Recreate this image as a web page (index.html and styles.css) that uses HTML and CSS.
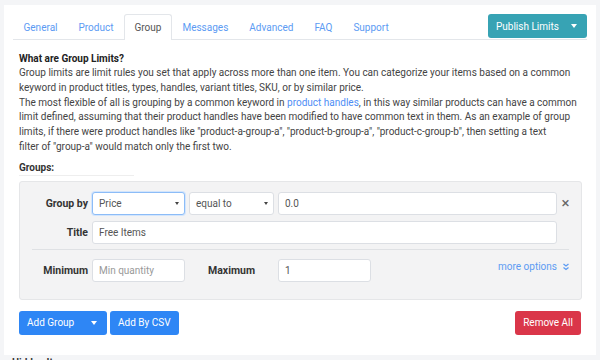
FILE: index.html
```html
<!DOCTYPE html>
<html>
<head>
  <title>Group Limits</title>
  <link rel="stylesheet" href="styles.css">
</head>
<body>
  <div class="card">
    <div class="nav">
      <ul class="tabs">
        <li><a href="#">General</a></li>
        <li><a href="#">Product</a></li>
        <li class="active"><a href="#">Group</a></li>
        <li><a href="#">Messages</a></li>
        <li><a href="#">Advanced</a></li>
        <li><a href="#">FAQ</a></li>
        <li><a href="#">Support</a></li>
      </ul>
      <button class="btn btn-info">Publish Limits <span class="caret"></span></button>
    </div>

    <div class="content">
      <h4>What are Group Limits?</h4>
      <p class="intro">Group limits are limit rules you set that apply across more than one item. You can categorize your items based on a common keyword in product titles, types, handles, variant titles, SKU, or by similar price.<br>The most flexible of all is grouping by a common keyword in <a href="#">product handles</a>, in this way similar products can have a common limit defined, assuming that their product handles have been modified to have common text in them. As an example of group limits, if there were product handles like "product-a-group-a", "product-b-group-a", "product-c-group-b", then setting a text<br>filter of "group-a" would match only the first two.</p>

      <h5>Groups:</h5>

      <div class="group-box">
        <div class="grid">
          <label>Group by</label>
          <div class="select focus">Price</div>
          <div class="select">equal to</div>
          <input type="text" value="0.0">
          <span class="close">&times;</span>

          <label>Title</label>
          <input class="wide" type="text" value="Free Items">
        </div>

        <hr>

        <div class="grid">
          <label>Minimum</label>
          <input type="text" placeholder="Min quantity">
          <label class="center">Maximum</label>
          <div class="max-cell">
            <input class="short" type="text" value="1">
            <a href="#" class="more">more options</a>
          </div>
          <span class="chev">
            <svg width="8" height="8" viewBox="0 0 8 8"><path d="M1.5 1l2.5 2 2.5-2M1.5 4.5l2.5 2 2.5-2" fill="none" stroke="#5c9bf3" stroke-width="1.3"/></svg>
          </span>
        </div>
      </div>

      <div class="actions">
        <button class="btn btn-primary add">Add Group <span class="caret"></span></button>
        <button class="btn btn-primary">Add By CSV</button>
        <button class="btn btn-danger right">Remove All</button>
      </div>
    </div>
  </div>
  <div class="below">Hidden Items</div>
</body>
</html>
```

FILE: styles.css
```css
body {
  font-family: Roboto, "Noto Sans", sans-serif;
  font-size: 10px;
  color: #444;
  background-color: #f4f5f7;
  margin: 0;
  padding: 5px 4px 0 4px;
}

.card {
  background-color: #fff;
  padding: 9px 9px 19px 9px;
  height: 322px;
}

.nav {
  display: flex;
  justify-content: space-between;
  align-items: flex-start;
  border-bottom: 1px solid #e3e6ea;
  height: 25px;
}

.tabs {
  list-style: none;
  margin: 0;
  padding: 0;
  display: flex;
}

.tabs li a {
  display: block;
  height: 25px;
  line-height: 25px;
  padding: 0 9.5px;
  color: #5c9bf3;
  text-decoration: none;
  border: 1px solid transparent;
  border-bottom: none;
  box-sizing: border-box;
  border-radius: 3px 3px 0 0;
}

.tabs li.active a {
  color: #555;
  background: #fff;
  border-color: #e3e6ea;
  height: 26px;
}

.btn {
  font-family: inherit;
  font-size: 10px;
  color: #fff;
  border: none;
  border-radius: 3px;
  height: 24px;
  padding: 0 8px;
  cursor: pointer;
  display: inline-flex;
  align-items: center;
  white-space: nowrap;
}

.btn-info {
  background-color: #37a3b4;
  width: 99px;
}

.btn-primary {
  background-color: #2e86f5;
}

.btn-danger {
  background-color: #da3649;
}

.caret {
  display: inline-block;
  width: 0;
  height: 0;
  border-left: 3.5px solid transparent;
  border-right: 3.5px solid transparent;
  border-top: 4px solid #fff;
  margin-left: auto;
  margin-right: 2px;
}

.content {
  padding: 0 5px 0 6px;
}

h4 {
  font-size: 10px;
  font-weight: bold;
  color: #222;
  margin: 11px 0 0 0;
  line-height: 15px;
}

.intro {
  margin: 0;
  line-height: 14.8px;
}

a {
  color: #4f8ef5;
  text-decoration: none;
}

h5 {
  font-size: 10px;
  font-weight: bold;
  color: #333;
  margin: 6px 0 0 0;
  line-height: 13px;
  padding-bottom: 1px;
  border-bottom: 1px solid #eee;
  width: 115px;
}

.group-box {
  margin-top: 5px;
  background-color: #f3f3f4;
  border: 1px solid #e5e6e8;
  border-radius: 3px;
  padding: 10px 12px 17px 12px;
}

.grid {
  display: grid;
  grid-template-columns: 56px 93px 85px 279px 9px;
  column-gap: 4px;
  row-gap: 6px;
  align-items: center;
}

.grid label {
  font-weight: bold;
  color: #333;
  text-align: right;
  font-size: 10.5px;
}

.grid label.center {
  text-align: center;
}

input, .select {
  font-family: inherit;
  font-size: 10px;
  color: #555;
  height: 23px;
  box-sizing: border-box;
  border: 1px solid #dcdfe4;
  border-radius: 3px;
  background: #fff;
  padding: 0 6px;
  width: 100%;
  margin: 0;
}

input::placeholder {
  color: #999;
}

.select {
  line-height: 21px;
  position: relative;
}

.select::after {
  content: "";
  position: absolute;
  right: 5px;
  top: 9px;
  border-left: 2.5px solid transparent;
  border-right: 2.5px solid transparent;
  border-top: 3.5px solid #444;
}

.select.focus {
  border-color: #8cbcf7;
  box-shadow: 0 0 0 1px #d3e5fc;
}

.wide {
  grid-column: 2 / 5;
}

.close {
  font-size: 15px;
  color: #666;
  text-align: center;
  line-height: 14px;
}

hr {
  border: none;
  border-top: 1px solid #dfe1e4;
  margin: 5px 0 9px 0;
}

.max-cell {
  display: flex;
  justify-content: space-between;
  align-items: center;
}

.short {
  width: 93px;
}

.more {
  color: #5c9bf3;
  margin-top: -7px;
}

.chev {
  margin-top: -7px;
  display: flex;
  justify-content: center;
}

.actions {
  display: flex;
  gap: 3px;
  margin-top: 11px;
  padding-right: 1px;
}

.add {
  width: 88px;
}

.right {
  margin-left: auto;
}

.below {
  font-weight: bold;
  color: #333;
  padding: 2px 8px;
}
```
